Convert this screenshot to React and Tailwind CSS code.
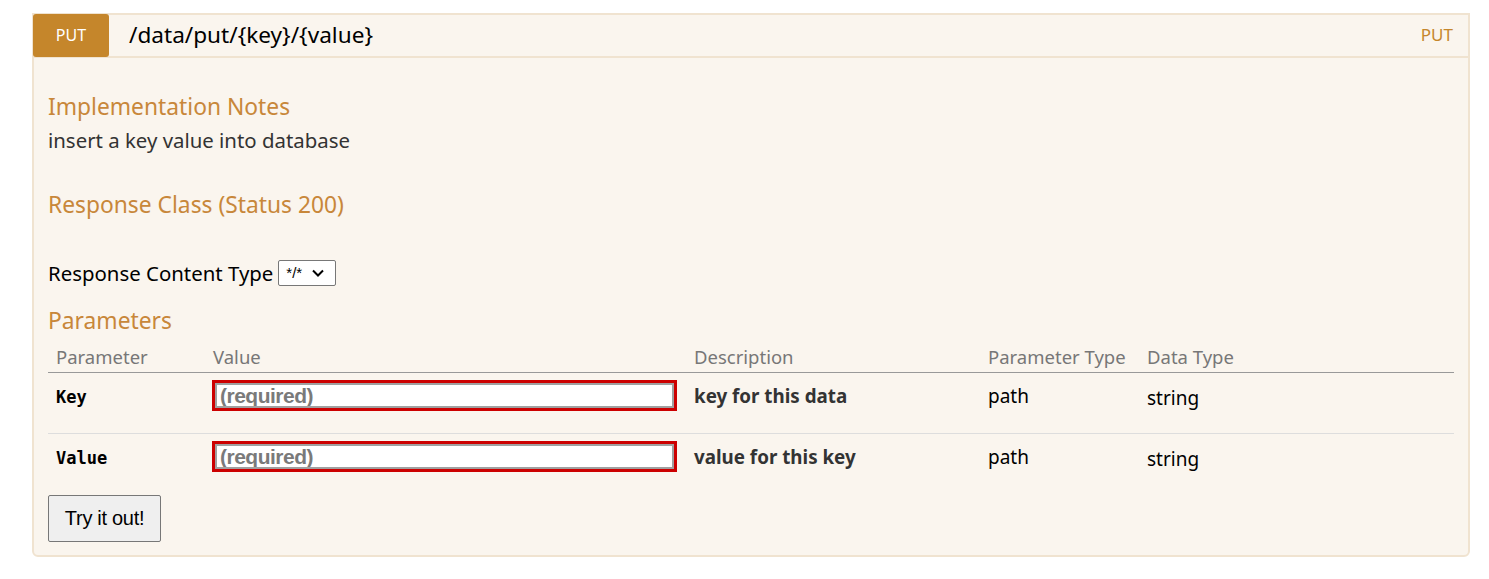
import React from 'react';

const params = [
  { name: 'Key', description: 'key for this data', paramType: 'path', dataType: 'string' },
  { name: 'Value', description: 'value for this key', paramType: 'path', dataType: 'string' },
];

const RequiredInput = () => (
  <div className="flex h-[31px] w-[465px] border-[3px] border-[#cc0000]">
    <input
      type="text"
      placeholder="(required)"
      className="block w-full h-full border-2 border-[#a0a0a0] bg-white px-[3px] py-0 text-[21px] leading-[21px] font-bold text-black placeholder:text-[#7a7a7a] outline-none [font-family:'Liberation_Sans',Arial,sans-serif] tracking-[-0.5px]"
    />
  </div>
);

const App = () => {
  return (
    <div className="min-h-[579px] bg-white pt-[13px] px-[32px] [font-family:'Noto_Sans',sans-serif]">
      <div className="w-[1438px] border-2 border-[#f0e3d0] rounded-b-[6px] bg-[#faf5ee]">
        <div className="flex items-center h-[44px] border-b-2 border-[#f0e3d0] -mt-[1px] -mx-[1px]">
          <span className="flex items-center justify-center w-[76px] h-[43px] bg-[#c5862b] rounded-[3px] text-white text-[16px]">PUT</span>
          <span className="ml-[20px] text-[22.6px] leading-[30px] text-black">/data/put/{'{key}'}/{'{value}'}</span>
          <span className="ml-auto mr-[16px] text-[17px] text-[#c5862b]">PUT</span>
        </div>

        <div className="px-[14px] pt-[34px] pb-[13px]">
          <h4 className="text-[22.8px] leading-[30px] text-[#c8873a]">Implementation Notes</h4>
          <p className="mt-[3px] text-[20.4px] leading-[30px] text-[#333]">insert a key value into database</p>

          <h4 className="mt-[35px] text-[22.8px] leading-[30px] text-[#c8873a]">Response Class (Status 200)</h4>

          <div className="mt-[39px] flex items-center gap-[5px] h-[28px]">
            <span className="text-[20.4px] leading-[28px] text-black">Response Content Type</span>
            <div className="flex items-center gap-[10px] h-[26px] w-[58px] border border-[#777] rounded-[2px] bg-white px-[7px] text-[15px] text-black [font-family:'Liberation_Sans',Arial,sans-serif]">
              <span>*/*</span>
              <svg width="12" height="8" viewBox="0 0 12 8" fill="none" stroke="black" strokeWidth="2">
                <path d="M1 1.5l5 5 5-5" />
              </svg>
            </div>
          </div>

          <h4 className="mt-[19px] text-[22.8px] leading-[30px] text-[#c8873a]">Parameters</h4>

          <table className="mt-[9px] w-[1406px] border-collapse text-left">
            <thead>
              <tr className="border-b border-[#999]">
                <th className="w-[158px] pl-[8px] pb-[3px] font-normal text-[18.5px] leading-[24px] text-[#777]">Parameter</th>
                <th className="w-[481px] pl-[7px] pb-[3px] font-normal text-[18.5px] leading-[24px] text-[#777]">Value</th>
                <th className="w-[294px] pl-[7px] pb-[3px] font-normal text-[18.5px] leading-[24px] text-[#777]">Description</th>
                <th className="w-[159px] pl-[7px] pb-[3px] font-normal text-[18.5px] leading-[24px] text-[#777]">Parameter Type</th>
                <th className="pl-[7px] pb-[3px] font-normal text-[18.5px] leading-[24px] text-[#777]">Data Type</th>
              </tr>
            </thead>
            <tbody>
              {params.map((p, index) => (
                <tr key={index} className={index === 0 ? 'border-b border-[#ddd]' : ''}>
                  <td className="align-top pl-[8px] pt-[12px] h-[61px] text-[17px] leading-[24px] font-bold text-black [font-family:'DejaVu_Sans_Mono',monospace]">{p.name}</td>
                  <td className="align-top pl-[6px] pt-[7px]">
                    <RequiredInput />
                  </td>
                  <td className="align-top pl-[7px] pt-[11px] text-[18.8px] leading-[24px] font-bold text-[#333]">{p.description}</td>
                  <td className="align-top pl-[7px] pt-[11px] text-[19px] leading-[24px] text-black">{p.paramType}</td>
                  <td className="align-top pl-[7px] pt-[13px] text-[19px] leading-[24px] text-black">{p.dataType}</td>
                </tr>
              ))}
            </tbody>
          </table>

          <button className="w-[113px] h-[47px] border border-[#777] rounded-[2px] bg-[#efefef] text-[20px] text-black [font-family:'Liberation_Sans',Arial,sans-serif] tracking-[-0.3px]">
            Try it out!
          </button>
        </div>
      </div>
    </div>
  );
};

export default App;
